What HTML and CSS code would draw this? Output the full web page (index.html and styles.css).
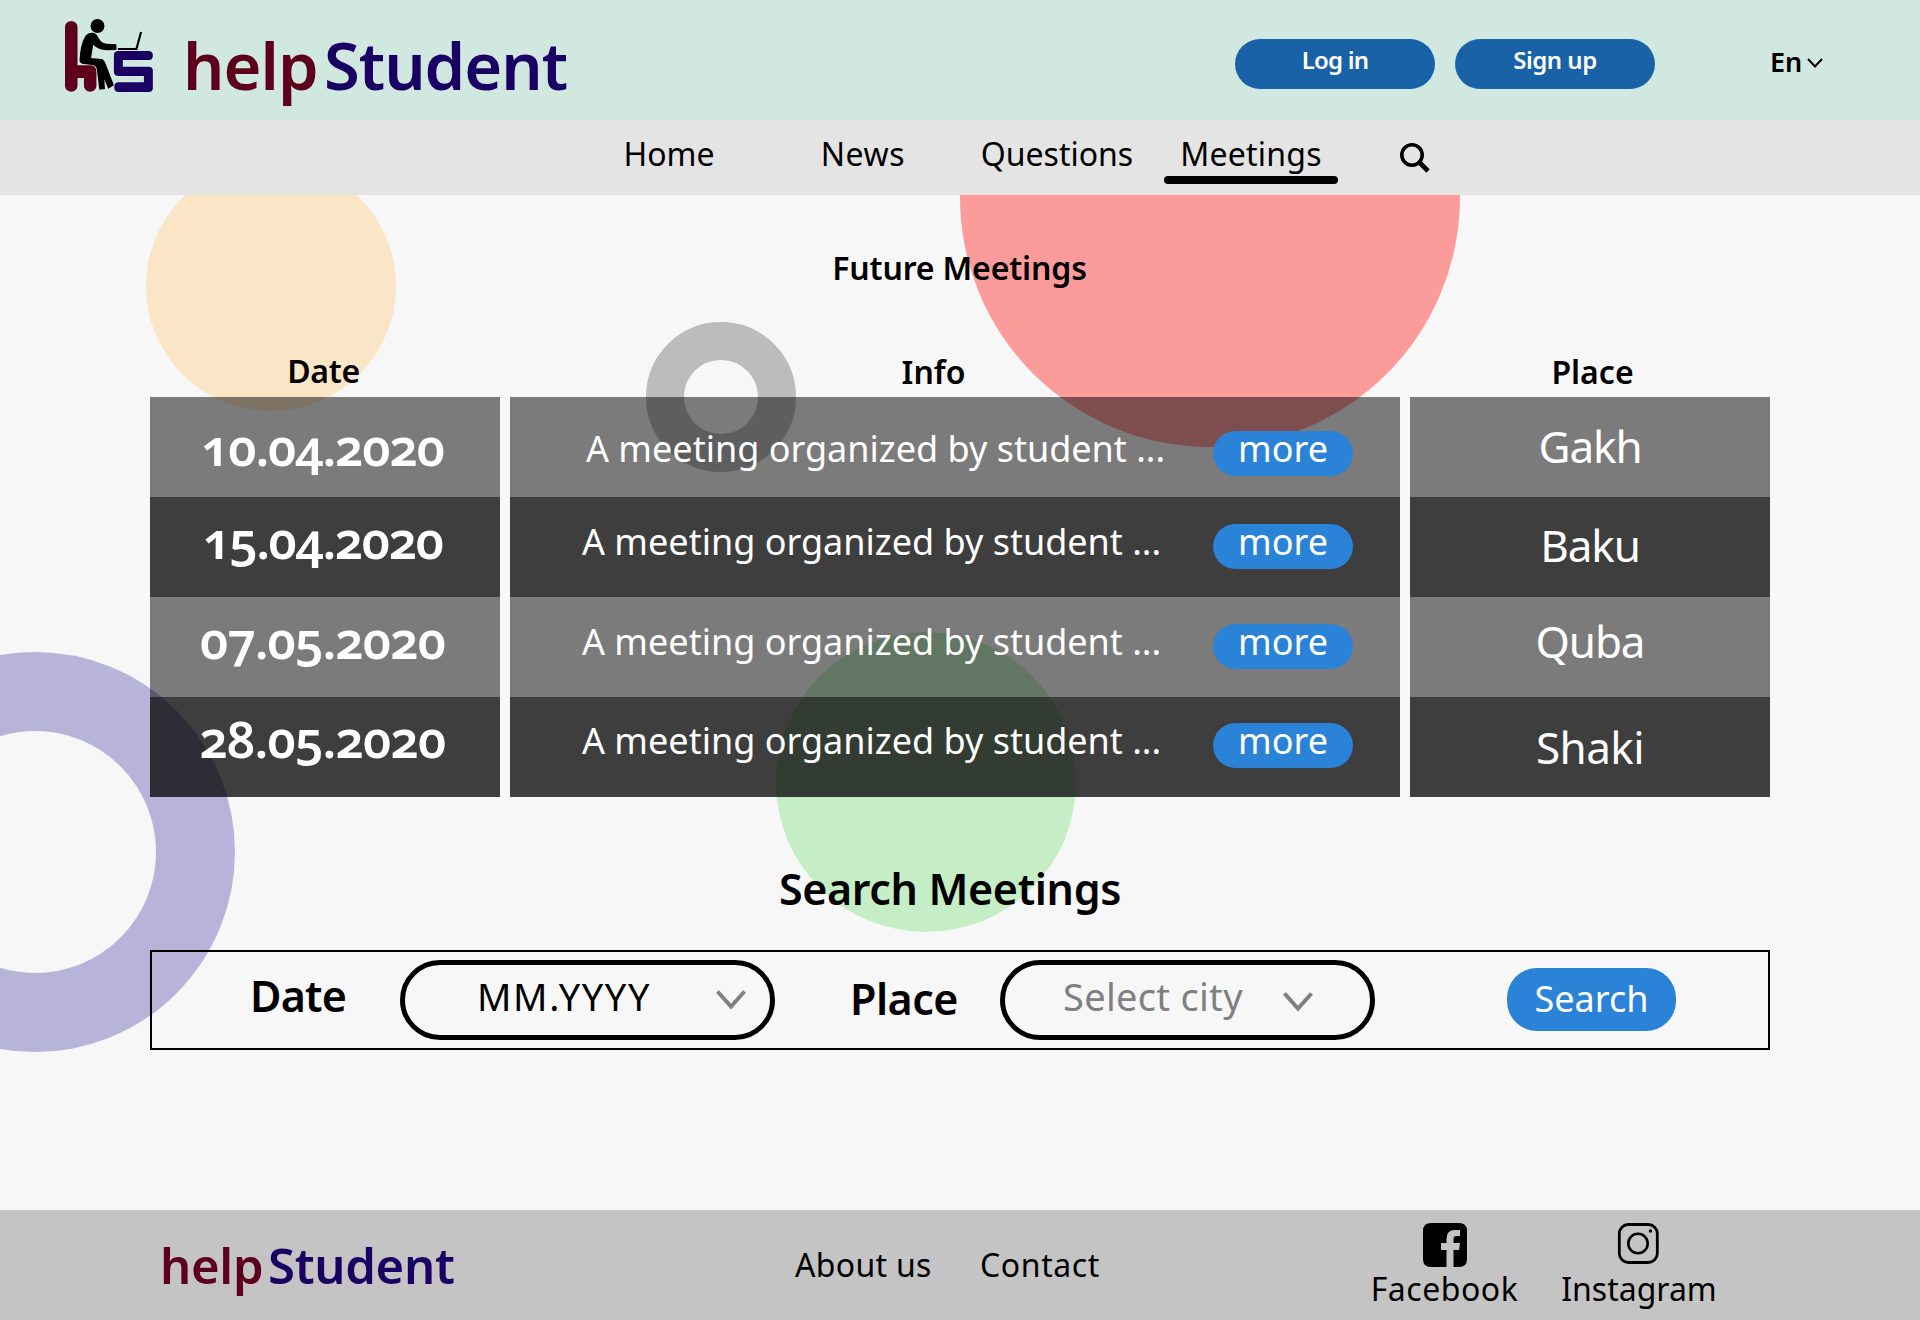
FILE: index.html
```html
<!DOCTYPE html>
<html lang="en">
<head>
<meta charset="utf-8">
<title>helpStudent – Meetings</title>
<link rel="stylesheet" href="styles.css">
</head>
<body>
<header class="header">
  <a class="brand">
    <svg class="brand-icon" viewBox="56 45 280 240" preserveAspectRatio="none" aria-hidden="true">
      <path fill="#5c001d" d="M70 80a17.5 17 0 0 1 35 0V196H140q18 0 18 20V258a17.500 17 0 0 1-35 0V234H105V258a17.500 17 0 0 1-35 0Z"/>
      <path fill="#1b0064" d="M220 153H304q12 0 12 13.500T304 180H232V200H304q12 0 12 12V264q0 12-12 12H220q-12 0-12-14.500T220 247H291V228H220q-13 0-13-12V165q0-12 13-12Z"/>
      <ellipse cx="161" cy="78" rx="19.500" ry="21"/>
      <path d="M146 98Q157 99 161 108Q170 130 186 131L214 133V150L187 151Q163 149 149 134L143 174L172 177Q180 179 185 194L207 256L191 266L180 238L182 267L166 269L159 207Q157 197 145 195L118 191Q109 187 111 176Q113 133 127 108Q134 98 146 98Z"/>
      <path d="M218 147H270L283 96" fill="none" stroke="#000" stroke-width="6"/>
    </svg>
    <span class="brand-name"><span class="help">help</span><span class="student">Student</span></span>
  </a>
  <div class="account">
    <button class="account-btn login">Log in</button>
    <button class="account-btn signup">Sign up</button>
  </div>
  <div class="lang">En<svg class="lang-arrow" viewBox="0 0 16 10"><path d="M1 1L8 8.500L15 1" fill="none" stroke="#000" stroke-width="2"/></svg></div>
</header>
<nav class="nav">
  <a class="nav-home">Home</a>
  <a class="nav-news">News</a>
  <a class="nav-questions">Questions</a>
  <a class="nav-meetings active">Meetings</a>
  <svg class="nav-search" viewBox="0 0 30 30"><circle cx="12" cy="12" r="10.200" fill="none" stroke="#000" stroke-width="3.600"/><path d="M18.500 18.500L28 28" stroke="#000" stroke-width="4.600"/></svg>
</nav>
<main class="main">
  <i class="shape orange"></i><i class="shape red"></i><i class="shape gray"></i><i class="shape purple"></i><i class="shape green"></i>
  <h1 class="title">Future Meetings</h1>
  <section class="table">
    <div class="col col-date">
      <h2 class="head">Date</h2>
      <div class="cell light"><b class="date d1">10.04.2020</b></div>
      <div class="cell dark"><b class="date d2">15.04.2020</b></div>
      <div class="cell light"><b class="date d3">07.05.2020</b></div>
      <div class="cell dark"><b class="date d4">28.05.2020</b></div>
    </div>
    <div class="col col-info">
      <h2 class="head">Info</h2>
      <div class="cell light i1"><span class="info">A meeting organized by student ...</span><button class="more">more</button></div>
      <div class="cell dark i2"><span class="info">A meeting organized by student ...</span><button class="more">more</button></div>
      <div class="cell light i3"><span class="info">A meeting organized by student ...</span><button class="more">more</button></div>
      <div class="cell dark i4"><span class="info">A meeting organized by student ...</span><button class="more">more</button></div>
    </div>
    <div class="col col-place">
      <h2 class="head">Place</h2>
      <div class="cell light"><span class="place p1">Gakh</span></div>
      <div class="cell dark"><span class="place p2">Baku</span></div>
      <div class="cell light"><span class="place p3">Quba</span></div>
      <div class="cell dark"><span class="place p4">Shaki</span></div>
    </div>
  </section>
  <h2 class="search-title">Search Meetings</h2>
  <section class="search">
    <span class="label label-date">Date</span>
    <div class="select select-date"><span class="value">MM.YYYY</span><svg class="arrow" viewBox="0 0 30 20"><path d="M1.500 1.500L15 16.500L28.500 1.500" fill="none" stroke="#808080" stroke-width="4"/></svg></div>
    <span class="label label-place">Place</span>
    <div class="select select-city"><span class="value">Select city</span><svg class="arrow" viewBox="0 0 30 20"><path d="M1.500 1.500L15 16.500L28.500 1.500" fill="none" stroke="#808080" stroke-width="4"/></svg></div>
    <button class="search-btn">Search</button>
  </section>
</main>
<footer class="footer">
  <span class="footer-brand"><span class="help">help</span><span class="student">Student</span></span>
  <div class="footer-links"><a class="about">About us</a><a class="contact">Contact</a></div>
  <div class="social">
    <a class="social-item facebook">
      <svg viewBox="0 0 44 44"><path d="M8 0H36Q44 0 44 8V36Q44 44 36 44H30.500V27H36L37 20H30.500V16Q30.500 13 33.500 13H37V7H31Q23.500 7.500 23.500 16V20H18V27H23.500V44H8Q0 44 0 36V8Q0 0 8 0Z"/></svg>
      <span>Facebook</span>
    </a>
    <a class="social-item instagram">
      <svg viewBox="0 0 44 44"><rect x="2.300" y="1.500" width="38" height="38" rx="9" fill="none" stroke="#000" stroke-width="2.800"/><circle cx="21" cy="20.500" r="9.700" fill="none" stroke="#000" stroke-width="2.600"/><circle cx="33.500" cy="8" r="1.700"/></svg>
      <span>Instagram</span>
    </a>
  </div>
</footer>
</body>
</html>
```

FILE: styles.css
```css
* { box-sizing: border-box; }
body { margin: 0; width: 1920px; height: 1320px; overflow: hidden; background: #f7f7f7; color: #000; font-family: "Noto Sans", "Open Sans", sans-serif; font-size: 32px; white-space: nowrap; }
h1, h2 { margin: 0; font-weight: 600; }
button { border: 0; padding: 0; font-family: inherit; color: #fff; }

.header { display: flex; height: 120px; background: #d1e8e1; }
.brand { display: flex; width: 1235px; padding-left: 60px; }
.brand-icon { flex: none; width: 100px; height: 80px; margin-top: 15px; }
.brand-name { display: flex; margin-left: 23px; font-size: 65px; font-weight: 600; line-height: 130px; letter-spacing: -1px; }
.help { color: #5c001d; }
.student { color: #1b0064; }
.brand-name .help { width: 141px; }
.account { display: flex; gap: 20px; padding-top: 39px; }
.account-btn { width: 200px; height: 50px; border-radius: 25px; background: #1962a7; font-size: 24px; font-weight: 650; line-height: 42px; padding-bottom: 9px; letter-spacing: -.5px; }
.login { letter-spacing: -.8px; }
.lang { display: flex; margin-left: 115px; font-size: 27px; font-weight: 600; line-height: 124px; }
.lang-arrow { width: 16px; height: 10px; margin: 58px 0 0 5px; }

.nav { display: flex; position: relative; z-index: 1; height: 75px; padding-left: 572px; background: #e4e4e4; line-height: 68px; }
.nav a { position: relative; width: 194px; text-align: center; }
.nav .nav-news { letter-spacing: .6px; }
.nav .nav-meetings { letter-spacing: .2px; }
.active::after { content: ""; position: absolute; left: 10px; top: 56px; width: 174px; height: 8px; border-radius: 4px; background: #000; }
.nav-search { width: 30px; height: 30px; margin: 23px 0 0 52px; }

.main { position: relative; height: 1015px; padding: 0 150px; }
.shape { position: absolute; z-index: -1; border-radius: 50%; }
.orange { left: 146px; top: -34px; width: 250px; height: 250px; background: #fae5c6; }
.red { left: 960px; top: -248px; width: 500px; height: 500px; background: #fb9c9b; }
.gray { left: 646px; top: 127px; width: 150px; height: 150px; border: 38px solid #bcbcbc; }
.purple { left: -165px; top: 457px; width: 400px; height: 400px; border: 79px solid #b8b3d8; }
.green { left: 776px; top: 437px; width: 300px; height: 300px; background: #c5eec6; }
.title { height: 152px; font-size: 32px; line-height: 146px; text-align: center; padding-right: 1px; letter-spacing: -.15px; }
.table { display: flex; gap: 10px; height: 450px; }
.col-date { width: 350px; }
.col-info { width: 890px; }
.col-place { width: 360px; }
.head { height: 50px; font-size: 32px; line-height: 50px; text-align: center; }
.col-date .head { line-height: 48px; padding-right: 3px; letter-spacing: -.3px; }
.col-info .head { padding-right: 43px; }
.col-place .head { padding-left: 5px; }
.cell { display: flex; height: 100px; color: #fff; }
.light { background: rgba(0,0,0,.5); }
.dark { background: rgba(0,0,0,.75); }
.date { width: 345px; text-align: center; font-size: 50px; font-weight: 650; font-variant-numeric: oldstyle-nums; letter-spacing: -1.2px; }
.d1 { line-height: 101px; }
.d2 { line-height: 87px; letter-spacing: -1.5px; }
.d3 { line-height: 87px; letter-spacing: -1px; }
.d4 { line-height: 85px; letter-spacing: -.9px; }
.info { width: 630px; font-size: 36px; line-height: 104px; }
.cell.i1 { padding-left: 76px; }
.cell.i2, .cell.i3, .cell.i4 { padding-left: 72px; }
.i2 .info, .i3 .info { line-height: 90px; }
.i4 .info { line-height: 88px; }
.more { width: 140px; height: 45px; margin: 34px 0 0 -3px; border-radius: 23px; background: #2a83d7; font-size: 36px; line-height: 36px; padding-bottom: 9px; }
.i2 .more, .i3 .more { margin: 27px 0 0 1px; }
.i4 .more { margin: 26px 0 0 1px; }
.place { width: 366px; text-align: center; font-size: 44px; letter-spacing: -1.1px; }
.p1 { line-height: 98px; }
.p2 { line-height: 96px; }
.p3 { line-height: 88px; }
.p4 { line-height: 100px; letter-spacing: -.6px; }
.search-title { height: 153px; font-size: 43px; line-height: 184px; text-align: center; padding-right: 20px; letter-spacing: -.35px; }
.search { display: flex; height: 100px; border: 2px solid #000; }
.label { font-size: 43px; font-weight: 600; letter-spacing: -.8px; }
.label-date { width: 150px; margin-left: 98px; line-height: 88px; }
.label-place { width: 150px; margin-left: 75px; line-height: 94px; letter-spacing: -.5px; }
.select { display: flex; width: 375px; height: 80px; margin-top: 8px; border: 5px solid #000; border-radius: 40px; font-size: 38px; line-height: 62px; }
.select .value { width: 238px; padding-left: 72px; letter-spacing: 1.6px; }
.arrow { width: 30px; height: 20px; margin: 25px 0 0 73px; }
.select-city .value { padding-left: 58px; color: #808080; letter-spacing: .3px; }
.select-city .arrow { margin: 27px 0 0 40px; }
.search-btn { width: 169px; height: 63px; margin: 16px 0 0 132px; border-radius: 30px; background: #2a83d7; font-size: 36px; line-height: 60px; padding-bottom: 1px; }

.footer { display: flex; height: 110px; background: #c4c4c4; }
.footer-brand { display: flex; width: 633px; padding-left: 160px; font-size: 49px; font-weight: 600; line-height: 111px; letter-spacing: -.3px; }
.footer-brand .help { width: 108px; }
.footer-links { display: flex; width: 580px; padding-left: 162px; line-height: 109px; letter-spacing: .3px; }
.about { width: 185px; }
.contact { letter-spacing: .6px; }
.social { display: flex; padding-top: 13px; }
.social-item { display: flex; flex-direction: column; align-items: center; line-height: 43px; }
.social-item svg { width: 44px; height: 44px; }
.facebook { width: 147px; margin-left: 158px; letter-spacing: .5px; }
.instagram { width: 150px; margin-left: 46px; }
```
